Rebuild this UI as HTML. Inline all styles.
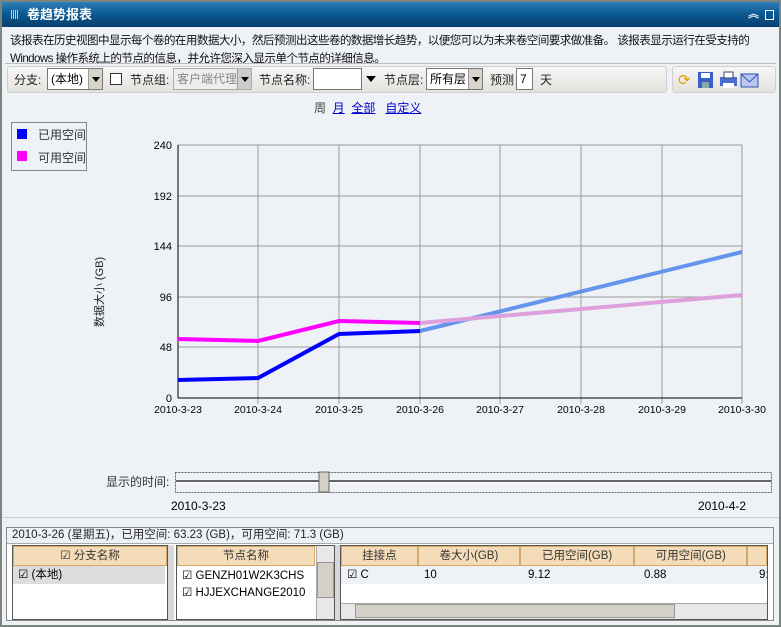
<!DOCTYPE html>
<html><head><meta charset="utf-8"><style>
*{box-sizing:border-box;margin:0;padding:0}
body{width:781px;height:627px;overflow:hidden;background:#7a8580;font-family:"Liberation Sans","Noto Sans CJK SC",sans-serif;font-size:12px;color:#000;position:relative}
.abs{position:absolute}
.title{left:2px;top:2px;width:777px;height:25px;background:linear-gradient(#2f80b8,#0d5a94 45%,#06406e);color:#fff;font-weight:bold;font-size:13px;line-height:25px;padding-left:25px}
.main{left:2px;top:27px;width:777px;height:598px;background:#eef2f7}
.desc{left:10px;top:32px;width:770px;font-size:11.6px;line-height:18px;color:#111;white-space:nowrap;letter-spacing:-0.6px}
.tb{top:66px;height:27px;background:linear-gradient(#f6f6f6,#e3e2de);border:1px solid #cfcfcf;border-radius:3px}
.sel{height:22px;top:68px;border:1px solid #777;background:#fff;line-height:20px;padding-left:3px}
.arr{position:absolute;right:0;top:0;width:14px;height:20px;background:#d8d4cc;border-left:1px solid #999}
.arr:after{content:"";position:absolute;left:3px;top:8px;border:4px solid transparent;border-top:5px solid #000;border-bottom:0}
.t{top:71px;color:#222}
.lnk{color:#00c;text-decoration:underline}
.hd{background:#f4dcb8;border:1px solid #d4a868;height:20px;line-height:19px;text-align:center;color:#333}
.bt{font-size:11.5px}
</style></head><body>
<div class="abs title"><span style="position:absolute;left:9px;top:8px;width:8px;height:9px;background:repeating-linear-gradient(90deg,#bcd 0 1px,transparent 1px 2px)"></span>卷趋势报表<span style="position:absolute;right:20px;top:0;font-size:11px">︽</span><span style="position:absolute;right:5px;top:8px;width:9px;height:10px;border:1.5px solid #fff"></span></div>
<div class="abs main"></div>
<div class="abs desc">该报表在历史视图中显示每个卷的在用数据大小，然后预测出这些卷的数据增长趋势，以便您可以为未来卷空间要求做准备。 该报表显示运行在受支持的<br>Windows 操作系统上的节点的信息，并允许您深入显示单个节点的详细信息。</div>
<div class="abs" style="left:5px;top:63px;width:771px;height:1px;background:#bbb"></div>
<div class="abs tb" style="left:7px;width:660px"></div>
<div class="abs tb" style="left:672px;width:104px"></div>
<span class="abs t" style="left:14px">分支:</span>
<div class="abs sel" style="left:47px;width:56px">(本地)<span class="arr"></span></div>
<div class="abs" style="left:110px;top:73px;width:12px;height:12px;border:1px solid #333;background:#fff"></div>
<span class="abs t" style="left:130px">节点组:</span>
<div class="abs sel" style="left:173px;width:79px;color:#888;background:#eee;border-color:#aaa">客户端代理<span class="arr" style="background:#ccc"></span></div>
<span class="abs t" style="left:259px">节点名称:</span>
<div class="abs sel" style="left:313px;width:49px"></div>
<div class="abs" style="left:366px;top:76px;border:5px solid transparent;border-top:6px solid #000"></div>
<span class="abs t" style="left:384px">节点层:</span>
<div class="abs sel" style="left:426px;width:57px">所有层<span class="arr"></span></div>
<span class="abs t" style="left:490px">预测</span>
<div class="abs sel" style="left:516px;width:17px">7</div>
<span class="abs t" style="left:540px">天</span>
<svg class="abs" style="left:676px;top:70px" width="85" height="20"><text x="2" y="15" font-size="15" fill="#e0a000">⟳</text><rect x="22" y="2" width="15" height="16" fill="#3a5fc8"/><rect x="25" y="3" width="9" height="5" fill="#fff"/><rect x="26" y="12" width="7" height="6" fill="#8aa"/><rect x="44" y="7" width="17" height="9" fill="#4a6fd0"/><rect x="48" y="2" width="9" height="6" fill="#fff" stroke="#446"/><rect x="47" y="13" width="11" height="5" fill="#fff"/><rect x="65" y="4" width="17" height="13" fill="#b8c8f0" stroke="#3050b0"/><path d="M65 4L73.5 12L82 4" stroke="#3050b0" fill="none"/></svg>
<div class="abs" style="top:99px;left:314px;color:#444">周 &nbsp;<span class="lnk">月</span> &nbsp;<span class="lnk">全部</span> &nbsp;&nbsp;<span class="lnk">自定义</span></div>
<div class="abs" style="left:11px;top:122px;width:76px;height:49px;border:1px solid #888"></div>
<div class="abs" style="left:17px;top:129px;width:10px;height:10px;background:#00f"></div>
<div class="abs" style="left:17px;top:151px;width:10px;height:10px;background:#f0f"></div>
<span class="abs" style="left:38px;top:126px;color:#333">已用空间</span>
<span class="abs" style="left:38px;top:149px;color:#333">可用空间</span>
<svg class="abs" style="left:0;top:0" width="781" height="627" font-family="Liberation Sans" font-size="11">
<g stroke="#999"><line x1="178" y1="145" x2="742" y2="145"/><line x1="178" y1="196" x2="742" y2="196"/><line x1="178" y1="246" x2="742" y2="246"/><line x1="178" y1="297" x2="742" y2="297"/><line x1="178" y1="347" x2="742" y2="347"/>
<line x1="258" y1="145" x2="258" y2="404"/><line x1="339" y1="145" x2="339" y2="404"/><line x1="420" y1="145" x2="420" y2="404"/><line x1="500" y1="145" x2="500" y2="404"/><line x1="581" y1="145" x2="581" y2="404"/><line x1="662" y1="145" x2="662" y2="404"/><line x1="742" y1="145" x2="742" y2="404"/></g>
<g stroke="#000"><line x1="178" y1="145" x2="178" y2="398"/><line x1="178" y1="398" x2="742" y2="398"/></g>
<g text-anchor="end"><text x="172" y="149">240</text><text x="172" y="200">192</text><text x="172" y="250">144</text><text x="172" y="301">96</text><text x="172" y="351">48</text><text x="172" y="402">0</text></g>
<g text-anchor="middle" font-size="10.5"><text x="178" y="413">2010-3-23</text><text x="258" y="413">2010-3-24</text><text x="339" y="413">2010-3-25</text><text x="420" y="413">2010-3-26</text><text x="500" y="413">2010-3-27</text><text x="581" y="413">2010-3-28</text><text x="662" y="413">2010-3-29</text><text x="742" y="413">2010-3-30</text></g>
<text transform="translate(103,292) rotate(-90)" text-anchor="middle" font-family="Liberation Sans,Noto Sans CJK SC" fill="#222">数据大小 (GB)</text>
<polyline points="420,331 742,252" stroke="#6495ed" stroke-width="4" fill="none"/>
<polyline points="420,323 742,295" stroke="#dda0dd" stroke-width="4" fill="none"/>
<polyline points="178,339 258,341 339,321 420,323" stroke="#f0f" stroke-width="4" fill="none"/>
<polyline points="178,380 258,378 339,334 420,331" stroke="#00f" stroke-width="4" fill="none"/>
<rect x="175.5" y="472.5" width="596" height="20" fill="none" stroke="#666" stroke-dasharray="2,1"/>
<line x1="176" y1="481" x2="771" y2="481" stroke="#666" stroke-width="2"/>
<line x1="176" y1="483" x2="771" y2="483" stroke="#fff"/>
<rect x="319" y="472" width="10" height="20" fill="#d4d0c8" stroke="#666"/>
</svg>
<span class="abs" style="left:106px;top:473px;color:#333">显示的时间:</span>
<span class="abs" style="left:171px;top:499px">2010-3-23</span>
<span class="abs" style="left:698px;top:499px">2010-4-2</span>
<div class="abs" style="left:2px;top:517px;width:777px;height:1px;background:#ccc"></div>
<div class="abs" style="left:6px;top:527px;width:768px;height:94px;border:1px solid #888;background:#fff"></div>
<div class="abs bt" style="left:7px;top:528px;width:766px;height:16px;background:#eef2f7;border-bottom:1px solid #aaa;line-height:15px;padding-left:5px;color:#222">2010-3-26 (星期五)，已用空间: 63.23 (GB)，可用空间: 71.3 (GB)</div>
<div class="abs" style="left:168px;top:545px;width:6px;height:75px;background:#d8d8d8"></div>
<div class="abs" style="left:335px;top:545px;width:5px;height:75px;background:#d8d8d8"></div>
<div class="abs" style="left:12px;top:545px;width:156px;height:75px;border:1px solid #555"></div>
<div class="abs hd bt" style="left:13px;top:546px;width:154px">☑ 分支名称</div>
<div class="abs bt" style="left:13px;top:566px;width:152px;height:18px;background:#ddd;line-height:18px;padding-left:5px">☑ (本地)</div>
<div class="abs" style="left:176px;top:545px;width:159px;height:75px;border:1px solid #555"></div>
<div class="abs hd bt" style="left:177px;top:546px;width:138px">节点名称</div>
<div class="abs" style="left:316px;top:546px;width:18px;height:73px;background:#e8e8e8;border-left:1px solid #aaa"><div style="margin-top:16px;height:36px;background:#d4d0c8;border:1px solid #999"></div></div>
<div class="abs bt" style="left:182px;top:568px;line-height:17px">☑ GENZH01W2K3CHS<br>☑ HJJEXCHANGE2010</div>
<div class="abs bt" style="left:340px;top:545px;width:428px;height:75px;border:1px solid #555;overflow:hidden">
<div style="display:flex;margin-top:0">
<div class="hd" style="width:78px">挂接点</div><div class="hd" style="width:104px">卷大小(GB)</div><div class="hd" style="width:116px">已用空间(GB)</div><div class="hd" style="width:115px">可用空间(GB)</div><div class="hd" style="width:20px"></div></div>
<div style="height:18px;background:#eef2f7;line-height:18px;position:relative"><span style="position:absolute;left:6px">☑ C</span><span style="position:absolute;left:83px">10</span><span style="position:absolute;left:187px">9.12</span><span style="position:absolute;left:303px">0.88</span><span style="position:absolute;left:418px">9:</span></div>
<div style="position:absolute;left:0;bottom:0;width:428px;height:16px;background:#e8e8e8;border-top:1px solid #aaa"><div style="margin-left:14px;width:320px;height:14px;background:#d4d0c8;border:1px solid #999"></div></div>
</div>
</body></html>
